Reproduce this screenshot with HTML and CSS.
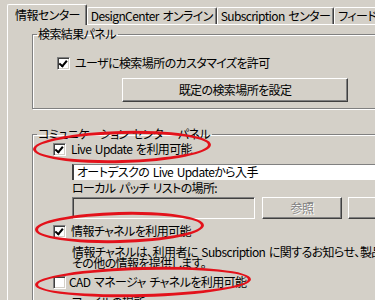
FILE: index.html
```html
<!DOCTYPE html>
<html lang="ja">
<head>
    <meta charset="UTF-8">
    <title>オプション - 情報センター</title>
    <link rel="stylesheet" href="styles.css">
</head>
<body>
    <div class="tabs">
        <div class="tab active">情報センター</div>
        <div class="tab">DesignCenter オンライン</div>
        <div class="tab">Subscription センター</div>
        <div class="tab">フィードバック</div>
    </div>

    <div class="panel">
        <fieldset class="group group-search">
            <legend>検索結果パネル</legend>
            <label class="row row-search"><span class="check on"></span>ユーザに検索場所のカスタマイズを許可</label>
            <button class="btn btn-wide">既定の検索場所を設定</button>
        </fieldset>

        <fieldset class="group group-comm">
            <legend>コミュニケーション センター パネル</legend>
            <label class="row row-live"><span class="check on"></span>Live Update を利用可能</label>
            <div class="indent">
                <div class="combo">オートデスクの Live Updateから入手</div>
                <div class="caption">ローカル パッチ リストの場所:</div>
                <div class="path-row">
                    <div class="textbox"></div>
                    <button class="btn btn-small" disabled>参照</button>
                    <button class="btn btn-small" disabled>パス</button>
                </div>
            </div>
            <label class="row row-info"><span class="check on"></span>情報チャネルを利用可能</label>
            <p class="note">情報チャネルは、利用者に Subscription に関するお知らせ、製品情報、<br>その他の情報を提供します。</p>
            <label class="row row-cad"><span class="check"></span>CAD マネージャ チャネルを利用可能</label>
            <div class="caption cut">ファイルの場所</div>
        </fieldset>
    </div>

    <!-- red marks drawn over the screenshot -->
    <div class="mark mark-live"></div>
    <div class="mark mark-info"></div>
    <div class="mark mark-cad"></div>
</body>
</html>
```

FILE: styles.css
```css
body {
    margin: 0;
    width: 375px;
    height: 300px;
    overflow: hidden;
    position: relative;
    background: #d4d0c8;
    color: #000;
    font-family: "Noto Sans CJK JP", "Noto Sans", sans-serif;
    font-size: 12px;
    font-feature-settings: "palt";
    letter-spacing: -0.6px;
    word-spacing: 1.5px;
    line-height: 14px;
}

/* tab strip */
.tabs {
    display: flex;
    align-items: flex-end;
    height: 24px;
    padding-left: 7px;
    white-space: nowrap;
}

.tab {
    box-sizing: border-box;
    height: 17px;
    padding: 0 3px;
    border-top: 1px solid #fff;
    border-left: 1px solid #fff;
    border-right: 1px solid #404040;
    box-shadow: inset -1px 0 0 #808080;
    line-height: 16px;
    border-radius: 2px 2px 0 0;
}

.tab.active {
    position: relative;
    z-index: 1;
    height: 21px;
    margin-bottom: -1px;
    padding: 0 6px 0 7px;
    line-height: 19px;
    background: #d4d0c8;
}

/* tab page */
.panel {
    width: 400px;
    margin-left: 7px;
    padding: 2px 0 0 24px;
    border-top: 1px solid #fff;
    border-left: 1px solid #fff;
    height: 280px;
}

.group {
    width: 380px;
    margin: 0;
    padding: 0;
    border: 1px solid #808080;
    box-shadow: inset 1px 1px 0 #fff, 1px 1px 0 #fff;
}

.group legend {
    margin-left: 4px;
    padding: 0 2px 0 1px;
    line-height: 14px;
}

.group-search {
    height: 80px;
}

.group-comm {
    margin-top: 18px;
    height: 200px;
}

/* checkbox rows */
.row {
    display: flex;
    align-items: center;
    gap: 5px;
    height: 14px;
    margin-left: 20px;
    white-space: nowrap;
}

.row-search {
    margin: 15px 0 0 24px;
}

.row-live {
    margin-top: 1px;
}

.row-info {
    margin-top: 5px;
}

.row-cad {
    margin-top: 7px;
    gap: 3px;
}

.check {
    box-sizing: border-box;
    width: 13px;
    height: 13px;
    flex: none;
    background: #fff;
    border-top: 1px solid #808080;
    border-left: 1px solid #808080;
    border-right: 1px solid #fff;
    border-bottom: 1px solid #fff;
    box-shadow: inset 1px 1px 0 #404040, inset -1px -1px 0 #d4d0c8;
    position: relative;
}

.check.on::after {
    content: "";
    position: absolute;
    left: 2px;
    top: 1px;
    width: 3px;
    height: 6px;
    border-right: 2px solid #000;
    border-bottom: 2px solid #000;
    transform: rotate(40deg);
    transform-origin: 60% 60%;
}

/* buttons */
.btn {
    box-sizing: border-box;
    font: inherit;
    font-feature-settings: "palt";
    letter-spacing: inherit;
    color: #000;
    background: #d4d0c8;
    border: 1px solid;
    border-color: #fff #404040 #404040 #fff;
    box-shadow: inset -1px -1px 0 #808080;
    padding: 0;
    line-height: 14px;
}

.btn:disabled {
    color: #808080;
    text-shadow: 1px 1px 0 #fff;
}

.btn-wide {
    display: block;
    width: 226px;
    height: 24px;
    margin: 8px 0 0 89px;
}

.btn-small {
    width: 80px;
    height: 22px;
    flex: none;
}

/* live update block */
.indent {
    margin: 8px 0 0 39px;
}

.combo {
    box-sizing: border-box;
    height: 16px;
    padding-left: 3px;
    background: #fff;
    border-top: 1px solid #808080;
    border-left: 2px solid #404040;
    line-height: 14px;
    white-space: nowrap;
}

.caption {
    margin-top: 1px;
    white-space: nowrap;
}

.path-row {
    display: flex;
    gap: 6px;
    margin-top: 2px;
}

.textbox {
    box-sizing: border-box;
    width: 183px;
    height: 22px;
    flex: none;
    margin-right: 1px;
    border-top: 1px solid #808080;
    border-left: 1px solid #808080;
    border-right: 1px solid #fff;
    border-bottom: 1px solid #fff;
    box-shadow: inset 1px 1px 0 #404040;
}

.note {
    margin: 8px 0 0 39px;
    line-height: 11px;
    white-space: nowrap;
}

.cut {
    margin-left: 39px;
    margin-top: 6px;
}

/* hand-drawn red ellipses */
.mark {
    position: absolute;
    border: 3px solid #e3121b;
    border-radius: 50%;
    box-sizing: border-box;
    transform: rotate(-1.5deg);
}

.mark-live {
    left: 33px;
    top: 131px;
    width: 178px;
    height: 32px;
}

.mark-info {
    left: 35px;
    top: 212px;
    width: 169px;
    height: 31px;
}

.mark-cad {
    left: 35px;
    top: 267px;
    width: 216px;
    height: 30px;
}
```
